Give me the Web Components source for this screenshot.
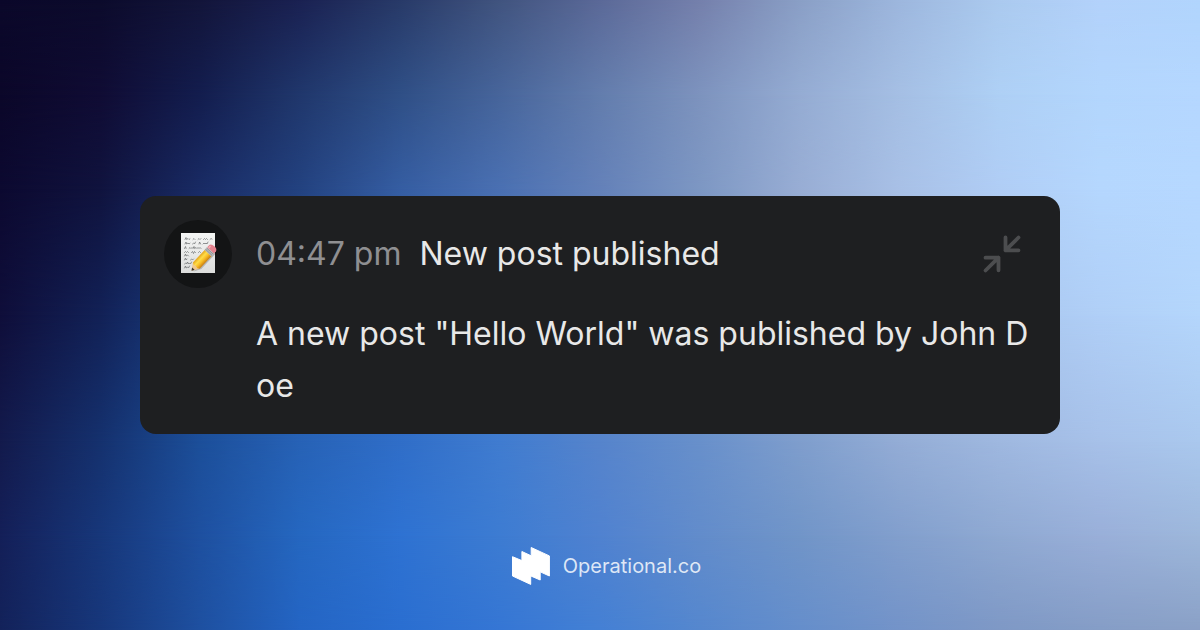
<!DOCTYPE html>
<html lang="en">
<head>
<meta charset="utf-8">
<meta name="viewport" content="width=device-width, initial-scale=1">
<title>New post published</title>
<style>
  body { margin: 0; font-family: Inter, "Liberation Sans", sans-serif; }
</style>
</head>
<body>
<gradient-stage>
  <event-card>
    <note-avatar slot="avatar"></note-avatar>
    <span slot="time">04:47 pm</span>
    <span slot="title">New post published</span>
    <collapse-button slot="action"></collapse-button>
    A new post "Hello World" was published by John Doe
  </event-card>
  <brand-link slot="footer" href="#">Operational.co</brand-link>
</gradient-stage>

<script>
const define = (name, html, setup) => {
  const template = document.createElement('template');
  template.innerHTML = html;
  customElements.define(name, class extends HTMLElement {
    constructor() {
      super();
      this.attachShadow({ mode: 'open' }).append(template.content.cloneNode(true));
    }
    connectedCallback() { if (setup) setup(this); }
  });
};

/* Mesh gradient: one horizontal ramp per height, each faded in over the one before. */
const ramps = [
  [0,   '#0b082a #0c0b2c #13153a #1a2152 #283a68 #41547f #5b6998 #7580ac #8a9fc6 #9db7de #abcaef #b3d2fb #b1d5fd'],
  [15,  '#0b0729 #100c34 #131d4e #20376c #2f4f86 #47659b #637dad #7d93be #95acd3 #a5bfe4 #aed0f5 #b3d6fd #b5d7ff'],
  [30,  '#0c0930 #10133e #192b64 #234280 #355da2 #4a70b2 #6481b9 #7d97c3 #98add4 #a8c0e6 #b0cdf5 #b5d7fe #b6d8ff'],
  [50,  '#0f0e3a #122156 #1a3f84 #2659a6 #3468ba #4877c2 #5e86c5 #7495c9 #8da8d2 #9fb9e0 #a9c6ed #b0cff7 #b4d6fc'],
  [70,  '#131a4c #15316e #1c4f9a #2762b6 #306ec8 #407cd0 #5684cc #6890cb #7f9ecd #94add6 #9fb8e0 #a7c1e9 #aac8ee'],
  [85,  '#141f58 #17377a #1e50a0 #2567c0 #2e72d2 #3d7cd2 #5082d0 #628ccb #7195c8 #829fcd #8fa9d2 #99afd9 #9db7db'],
  [100, '#13225a #17377b #1e50a0 #2465c4 #2a6ed0 #3576d4 #4480d4 #5587ce #658ecb #7393c8 #7e98c5 #859dc6 #8aa0c6']
];

define('gradient-stage', `
  <style>
    :host { display: grid; grid-template-rows: 1fr auto 1fr; min-height: 100vh; isolation: isolate; position: relative; }
    .sky, .sky div { position: absolute; inset: 0; }
    .sky { z-index: -1; overflow: hidden; }
    main { grid-row: 2; width: min(920px, 100% - 48px); margin: 0 auto; }
    footer { grid-row: 3; display: flex; justify-content: center; align-items: flex-end; padding-bottom: 44px; }
  </style>
  <div class="sky"></div>
  <main><slot></slot></main>
  <footer><slot name="footer"></slot></footer>
`, host => {
  const sky = host.shadowRoot.querySelector('.sky');
  ramps.forEach(([y, colours], i) => {
    const layer = document.createElement('div');
    layer.style.background = `linear-gradient(to right, ${colours.split(' ').join(', ')})`;
    if (i) layer.style.maskImage = `linear-gradient(to bottom, transparent ${ramps[i - 1][0]}%, #000 ${y}%)`;
    sky.append(layer);
  });
});

define('event-card', `
  <style>
    :host { display: block; background: #1e1f21; color: #e8e8e8; border-radius: 16px; padding: 24px 24px 22px; font-size: 32px; }
    article { display: grid; grid-template-columns: 68px 1fr; column-gap: 24px; row-gap: 20px; }
    header { display: flex; align-items: center; gap: 18px; }
    h1 { flex: 1; margin: 0; font-size: inherit; font-weight: 400; line-height: 52px; }
    time { color: #8f8f92; line-height: 52px; }
    p { grid-column: 2; margin: 0; line-height: 52px; word-break: break-all; }
  </style>
  <article>
    <slot name="avatar"></slot>
    <header>
      <time datetime="16:47"><slot name="time"></slot></time>
      <h1><slot name="title"></slot></h1>
      <slot name="action"></slot>
    </header>
    <p><slot></slot></p>
  </article>
`);

define('note-avatar', `
  <style>
    :host { display: block; width: 68px; height: 68px; border-radius: 50%; background: #131415; }
    svg { display: block; }
  </style>
  <svg width="68" height="68" viewBox="0 0 68 68" role="img" aria-label="Memo">
    <defs>
      <linearGradient id="sheet" x2="0" y2="1"><stop stop-color="#f4f5f4"/><stop offset="1" stop-color="#dcdddc"/></linearGradient>
      <linearGradient id="wood" x2="0" y2="1"><stop stop-color="#e5a51c"/><stop offset=".35" stop-color="#ffdd48"/><stop offset=".65" stop-color="#f8bc25"/><stop offset="1" stop-color="#c97f12"/></linearGradient>
    </defs>
    <rect x="17" y="13" width="34" height="40" fill="url(#sheet)"/>
    <g fill="none" stroke="#66686a" stroke-width=".7" stroke-linecap="round">
      <path d="M21 19.500l1-2 .6 2 1.400-1 1 1 1-.8M29 19.500l1-1 1 1M34 19.500l1-1 1 1 1-1M39.500 19.500l1-1 1 1 1-1 1 1M46 19.500l1-1 1 .6"/>
      <path d="M21 24l1-2 .6 2 1.400-1 1 1 1-.8M28.500 24l1-1 1 1 1-2M35 24l.6-2 1 2M39 24l1-1 1 1 1-1 1 1 1-2"/>
      <path d="M20.500 28.500l1-2 .6 2M25 28.500l1-1 1 1 1-1 1 1 1-2 .6 2 1.400-1 1 1 1-1 1 1 1-1 1 1"/>
      <path d="M20.500 32.500l1-1 1 1 1-1 1 1M27.500 32.500l1-1 1 2 1-2 1 1M34.500 32.500l1-1 1 1"/>
      <path d="M20.500 36l1-2 .6 2 1.400-1 1 1"/>
      <path d="M20.500 40l1-2 .6 2 1-1M26.500 40l1-1 1 1 1-1"/>
      <path d="M20.500 44l1-1 1 1 1-2 1 2 1-1 1 1 1-2"/>
      <path d="M20.500 48l1-2 .6 2 1.400-1 1 1 1-2"/>
    </g>
    <g transform="translate(27.500 50.800) rotate(-47)">
      <path d="M1 2L8 6H31V3Z" fill="#000" opacity=".2"/>
      <path d="M0 0L7-4.600V4.600Z" fill="#efc78e"/>
      <path d="M0 0L2.800-1.800V1.800Z" fill="#3a3430"/>
      <path d="M7-4.600H25V4.600H7L5.800 2.500 6.400 0 5.800-2.500Z" fill="url(#wood)"/>
      <path d="M24-4.600H28V4.600H24Z" fill="#b7b9bb"/>
      <path d="M25.300-4.600V4.600M27-4.600V4.600" stroke="#7d8083" stroke-width=".6"/>
      <path d="M28-4.600H31Q33.500-4 33.500 0T31 4.600H28Z" fill="#e5828e"/>
      <path d="M28.500-3H31" stroke="#f7b0b8" stroke-width="1.400"/>
    </g>
  </svg>
`);

define('collapse-button', `
  <style>
    :host { display: block; }
    button { display: grid; place-items: center; width: 68px; height: 68px; border: 0; padding: 0; background: none; color: #4c4d4f; cursor: pointer; }
  </style>
  <button type="button" aria-label="Collapse">
    <svg width="40" height="40" viewBox="0 0 40 40" fill="none" stroke="currentColor" stroke-width="3.800" stroke-linecap="round" stroke-linejoin="round">
      <path d="M23.500 3.500V16.300H36.500M23.500 16.300L36.500 3.500"/>
      <path d="M3.500 23.700H16.500V36.300M16.500 23.700L3.500 36.500"/>
    </svg>
  </button>
`);

define('brand-link', `
  <style>
    :host { display: block; }
    a { display: flex; align-items: center; gap: 12px; color: rgb(255 255 255 / .82); font-size: 20px; line-height: 24px; text-decoration: none; }
    svg { display: block; }
  </style>
  <a>
    <svg width="52" height="40" viewBox="0 0 52 40" fill="#fff" stroke="#fff" stroke-linejoin="round" aria-hidden="true">
      <path d="M13.500 10.700L22.900 14.600V5.500L32.200 9.800V1.500L50.400 9.900V30L41.200 25.800V34L31.700 29.900V38.400L13.500 30Z"/>
    </svg>
    <slot></slot>
  </a>
`, host => {
  host.shadowRoot.querySelector('a').href = host.getAttribute('href');
});
</script>
</body>
</html>
